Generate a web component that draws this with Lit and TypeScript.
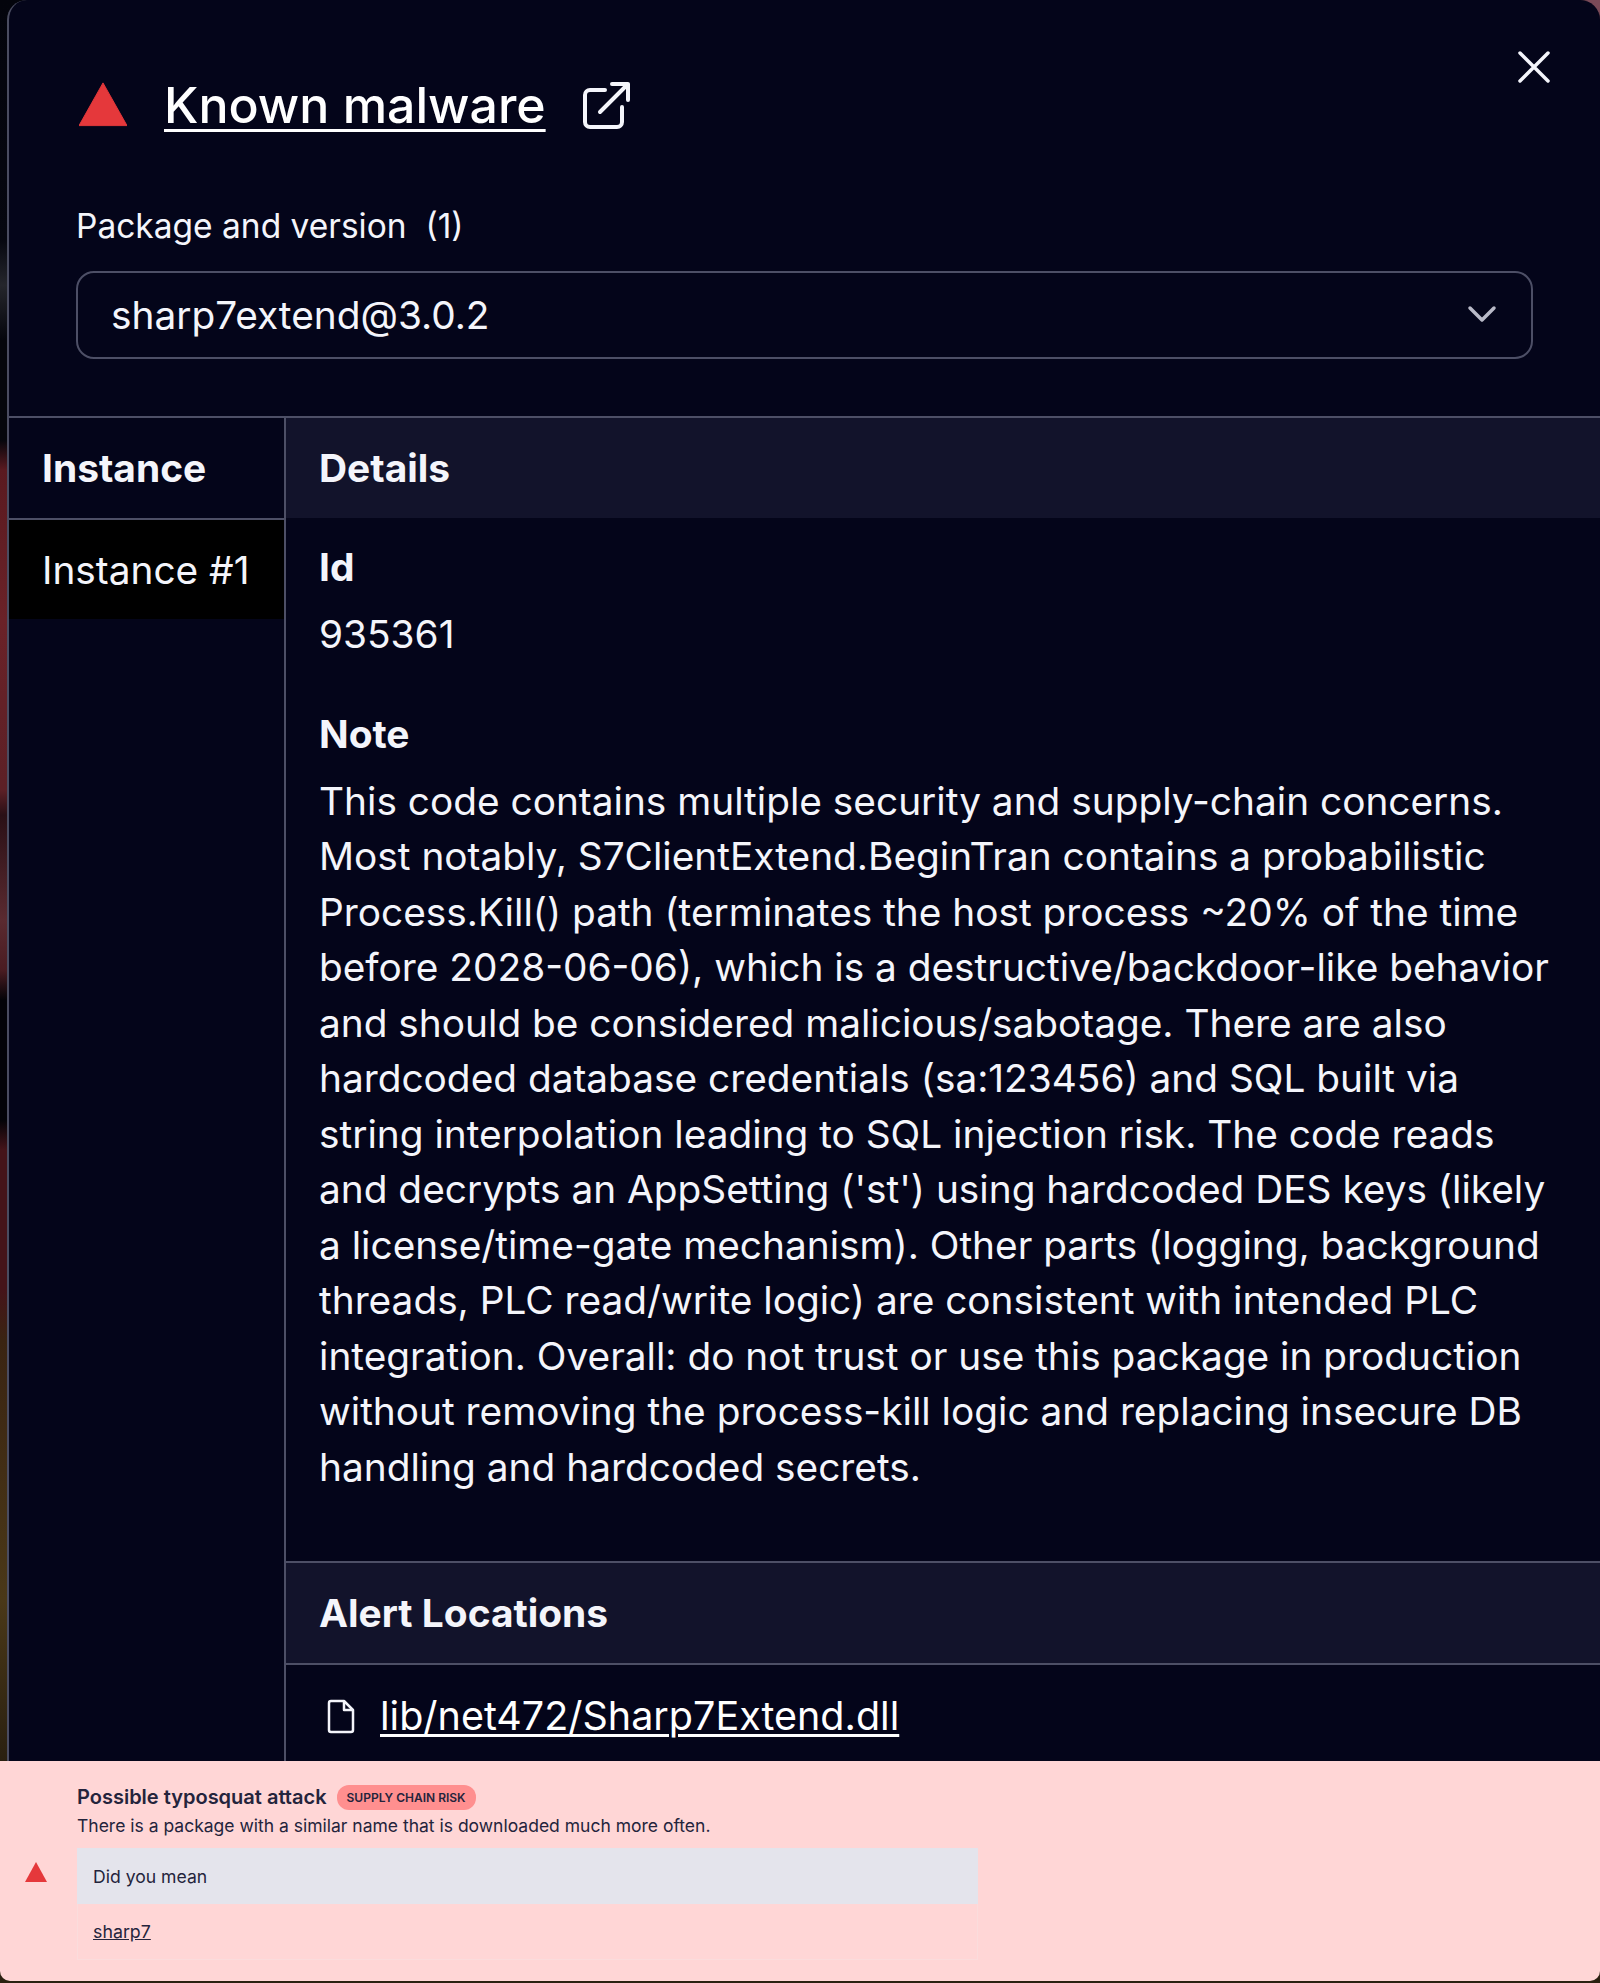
import { LitElement, html, css } from 'lit';
import { customElement } from 'lit/decorators.js';

const NOTE =
  "This code contains multiple security and supply-chain concerns. Most notably, S7ClientExtend.BeginTran contains a probabilistic Process.Kill() path (terminates the host process ~20% of the time before 2028-06-06), which is a destructive/backdoor-like behavior and should be considered malicious/sabotage. There are also hardcoded database credentials (sa:123456) and SQL built via string interpolation leading to SQL injection risk. The code reads and decrypts an AppSetting ('st') using hardcoded DES keys (likely a license/time-gate mechanism). Other parts (logging, background threads, PLC read/write logic) are consistent with intended PLC integration. Overall: do not trust or use this package in production without removing the process-kill logic and replacing insecure DB handling and hardcoded secrets.";

@customElement('app-root')
export class AppRoot extends LitElement {
  static styles = css`
    :host {
      display: block;
      width: 1600px;
      height: 1983px;
      overflow: hidden;
      font-family: Inter, 'Liberation Sans', sans-serif;
      background:
        radial-gradient(circle at 100% 0, #7a4a58 0, #7a4a58 12px, transparent 24px),
        linear-gradient(180deg, #03040c 0, #060710 240px, #25262c 285px, #05060c 340px, #05060c 440px, #5a1a20 470px, #6a2228 620px, #5c2026 790px, #2a1016 815px, #5a2a30 920px, #4a1c22 970px, #030308 1000px, #030308 1120px, #45141a 1150px, #45141a 1290px, #3a2412 1340px, #4a3818 1600px, #2a2010 1761px);
    }
    .panel {
      margin-left: 7px;
      height: 1761px;
      box-sizing: border-box;
      border-left: 2px solid #4a4c60;
      border-radius: 20px 20px 0 0;
      background: #04051a;
      color: #f4f5fb;
      overflow: hidden;
      display: flex;
      flex-direction: column;
    }
    .top {
      position: relative;
      height: 416px;
      box-sizing: border-box;
      padding: 79px 67px 0 67px;
      flex: none;
    }
    .close {
      position: absolute;
      right: 49px;
      top: 50px;
      width: 34px;
      height: 34px;
    }
    .title {
      display: flex;
      align-items: center;
      height: 52px;
    }
    .title .tri {
      width: 48px;
      height: 46px;
      margin: 0 37px 2px 3px;
    }
    .title a {
      font-size: 50px;
      font-weight: 500;
      color: #fff;
      text-decoration: underline;
      text-decoration-thickness: 3px;
      text-underline-offset: 6px;
    }
    .title .ext {
      width: 50px;
      height: 50px;
      margin-left: 36px;
    }
    .label {
      margin-top: 73px;
      font-size: 33.500px;
      line-height: 44px;
    }
    .select {
      margin-top: 23px;
      height: 88px;
      box-sizing: border-box;
      border: 2px solid #4d4f66;
      border-radius: 18px;
      display: flex;
      align-items: center;
      justify-content: space-between;
      padding: 0 34px 2px 33px;
      font-size: 38.800px;
    }
    .select svg {
      width: 30px;
      height: 18px;
    }
    .table {
      flex: 1;
      display: flex;
      border-top: 2px solid #4d4f66;
      min-height: 0;
    }
    .col-instance {
      width: 275px;
      flex: none;
      border-right: 2px solid #4d4f66;
    }
    .col-instance .head {
      height: 102px;
      box-sizing: border-box;
      border-bottom: 2px solid #4d4f66;
      padding: 0 0 2px 33px;
      display: flex;
      align-items: center;
      font-size: 38.900px;
      font-weight: 700;
    }
    .col-instance .row {
      height: 99px;
      background: #000;
      padding-left: 33px;
      display: flex;
      align-items: center;
      font-size: 38.800px;
    }
    .col-details {
      flex: 1;
      min-width: 0;
    }
    .band {
      height: 100px;
      box-sizing: border-box;
      background: #12132b;
      padding: 0 0 2px 33px;
      display: flex;
      align-items: center;
      font-size: 38.900px;
      font-weight: 700;
    }
    .body {
      height: 1043px;
      box-sizing: border-box;
      padding: 21px 33px 0;
      font-size: 38.800px;
      line-height: 55.500px;
    }
    .body h4 {
      margin: 0;
      font-size: 38.900px;
      font-weight: 700;
      line-height: 55.500px;
    }
    .body .val {
      margin: 11px 0 45px;
    }
    .body .note {
      margin: 11px 0 0;
      width: 1250px;
    }
    .band.alert {
      height: 104px;
      border-top: 2px solid #4d4f66;
      border-bottom: 2px solid #4d4f66;
    }
    .file {
      display: flex;
      align-items: center;
      padding: 26px 0 0 41px;
      font-size: 39.500px;
      line-height: 50px;
    }
    .file svg {
      width: 28px;
      height: 35px;
      margin-right: 25px;
    }
    .file a {
      color: #fff;
      text-decoration: underline;
      text-decoration-thickness: 3px;
      text-underline-offset: 4px;
    }
    .alert-box {
      position: relative;
      height: 220px;
      background: #ffd6d6;
      border-radius: 0 0 10px 10px;
      color: #24243c;
      display: flex;
    }
    .alert-box .tri {
      width: 22px;
      height: 20px;
      margin: 101px 30px 0 25px;
      flex: none;
    }
    .alert-main {
      padding-top: 23px;
      width: 901px;
    }
    .alert-title {
      display: flex;
      align-items: center;
      height: 26px;
      font-size: 20px;
      font-weight: 600;
    }
    .badge {
      margin-left: 10px;
      background: #ff8f8f;
      border-radius: 12px;
      padding: 0 10px;
      height: 25px;
      line-height: 25px;
      font-size: 12px;
      font-weight: 600;
      text-transform: uppercase;
    }
    .alert-desc {
      margin: 3px 0 9px;
      font-size: 17.500px;
      line-height: 26px;
    }
    .mean-head {
      height: 56px;
      background: #e4e4ec;
      padding-left: 16px;
      display: flex;
      align-items: center;
      font-size: 17.600px;
    }
    .mean-row {
      height: 56px;
      box-sizing: border-box;
      border: 1px solid #fbdcdc;
      border-top: 0;
      padding-left: 15px;
      display: flex;
      align-items: center;
      font-size: 17.800px;
    }
    .mean-row a {
      color: #24243c;
      text-decoration: underline;
    }
  `;

  render() {
    return html`
      <div class="panel">
        <div class="top">
          <svg class="close" viewBox="0 0 34 34" fill="none" stroke="#f4f5fb" stroke-width="3.500" stroke-linecap="round">
            <path d="M3 3l28 28M31 3L3 31" />
          </svg>
          <div class="title">
            <svg class="tri" viewBox="0 0 50 46"><path d="M25 1L50 45.500H0z" fill="#e5383b" stroke="#e5383b" stroke-linejoin="round" /></svg>
            <a href="#">Known malware</a>
            <svg class="ext" viewBox="0 0 50 50" fill="none" stroke="#f4f5fb" stroke-width="4" stroke-linecap="round" stroke-linejoin="round">
              <path d="M23 10H8a5 5 0 0 0-5 5v27a5 5 0 0 0 5 5h27a5 5 0 0 0 5-5V27" />
              <path d="M18 32L46 4M30 4h16v16" />
            </svg>
          </div>
          <div class="label">Package and version&nbsp; (1)</div>
          <div class="select">
            <span>sharp7extend@3.0.2</span>
            <svg viewBox="0 0 30 18" fill="none" stroke="#b9bac8" stroke-width="3.500" stroke-linecap="round" stroke-linejoin="round">
              <path d="M3 3l12 12L27 3" />
            </svg>
          </div>
        </div>
        <div class="table">
          <div class="col-instance">
            <div class="head">Instance</div>
            <div class="row">Instance #1</div>
          </div>
          <div class="col-details">
            <div class="band">Details</div>
            <div class="body">
              <h4>Id</h4>
              <div class="val">935361</div>
              <h4>Note</h4>
              <div class="note">${NOTE}</div>
            </div>
            <div class="band alert">Alert Locations</div>
            <div class="file">
              <svg viewBox="0 0 28 35" fill="none" stroke="#f4f5fb" stroke-width="2.500" stroke-linejoin="round">
                <path d="M4 2h13l9 9v20a2 2 0 0 1-2 2H4a2 2 0 0 1-2-2V4a2 2 0 0 1 2-2z" />
                <path d="M17 2v9h9" />
              </svg>
              <a href="#">lib/net472/Sharp7Extend.dll</a>
            </div>
          </div>
        </div>
      </div>
      <div class="alert-box">
        <svg class="tri" viewBox="0 0 22 20"><path d="M11 0L22 20H0z" fill="#e5383b" /></svg>
        <div class="alert-main">
          <div class="alert-title">
            Possible typosquat attack
            <span class="badge">Supply chain risk</span>
          </div>
          <div class="alert-desc">There is a package with a similar name that is downloaded much more often.</div>
          <div class="mean-head">Did you mean</div>
          <div class="mean-row"><a href="#">sharp7</a></div>
        </div>
      </div>
    `;
  }
}
